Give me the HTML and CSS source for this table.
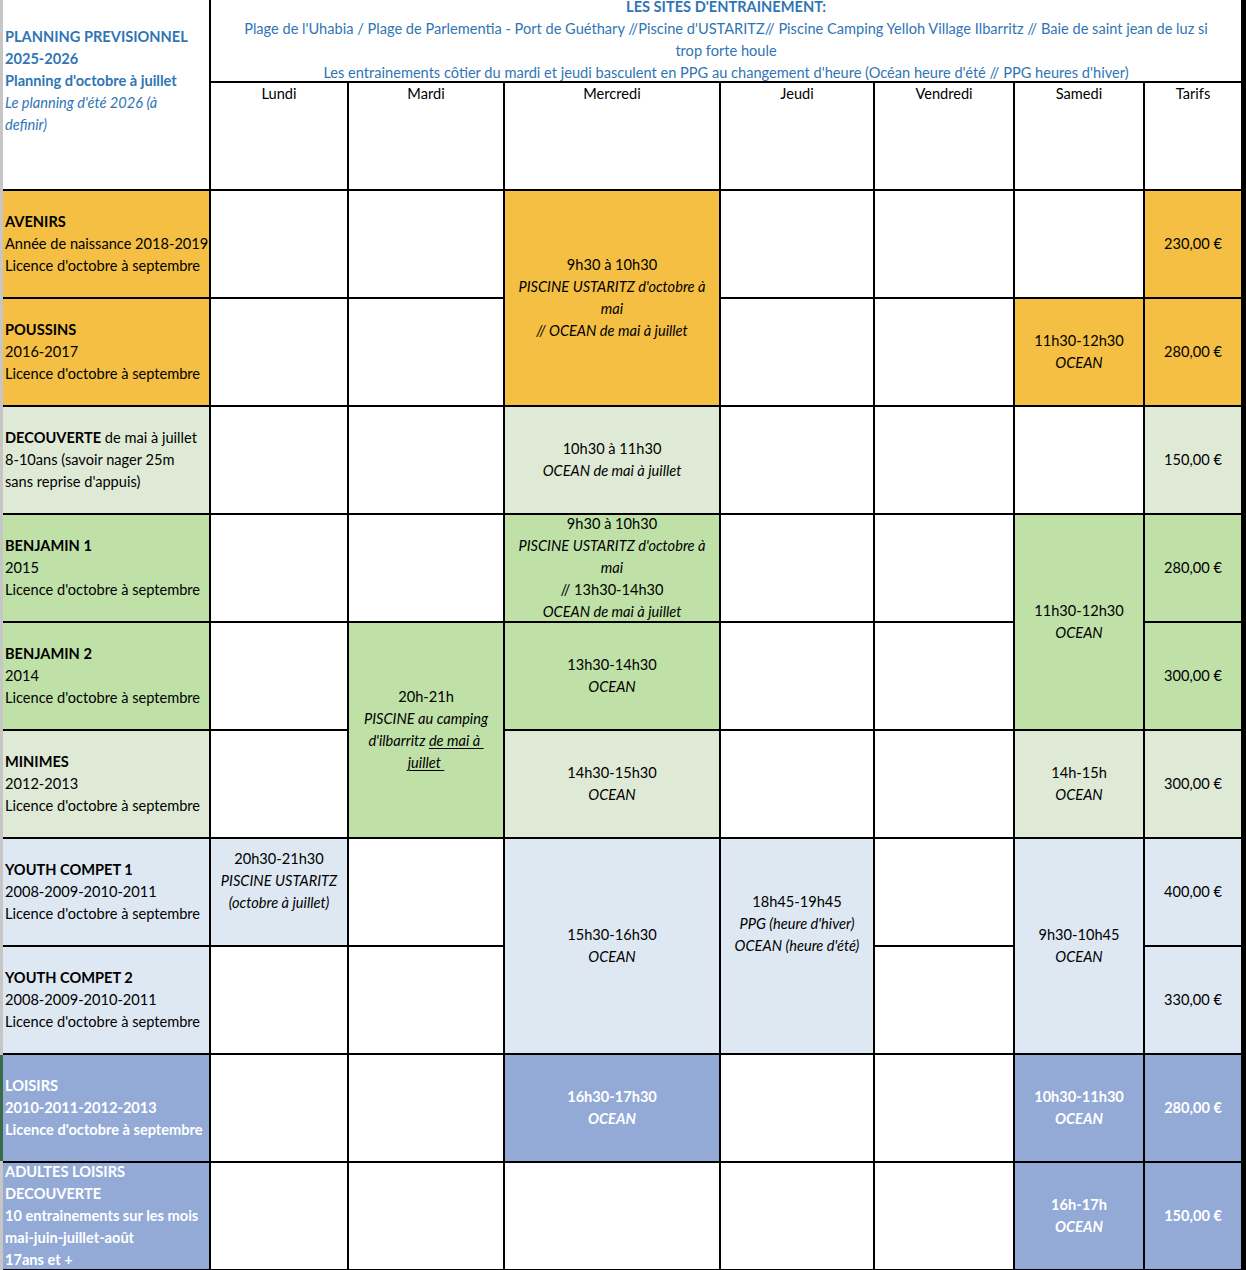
FILE: index.html
```html
<!DOCTYPE html>
<html lang="fr">
<head>
<meta charset="utf-8">
<title>Planning prévisionnel 2025-2026</title>
<link rel="stylesheet" href="styles.css">
</head>
<body>
<div class="sheet">
  <div class="grid">
    <div class="cell label title">
      <b>PLANNING PREVISIONNEL</b>
      <b>2025-2026</b>
      <b>Planning d'octobre à juillet</b>
      <i>Le planning d'été 2026 (à<br>definir)</i>
    </div>
    <div class="cell sites">
      <b>LES SITES D'ENTRAINEMENT:</b>
      <span>Plage de l'Uhabia / Plage de Parlementia - Port de Guéthary //Piscine d'USTARITZ// Piscine Camping Yelloh Village Ilbarritz // Baie de saint jean de luz si</span>
      <span>trop forte houle</span>
      <span>Les entrainements côtier du mardi et jeudi basculent en PPG au changement d'heure (Océan heure d'été // PPG heures d'hiver)</span>
    </div>

    <div class="cell day">Lundi</div>
    <div class="cell day">Mardi</div>
    <div class="cell day">Mercredi</div>
    <div class="cell day">Jeudi</div>
    <div class="cell day">Vendredi</div>
    <div class="cell day">Samedi</div>
    <div class="cell day">Tarifs</div>

    <!-- AVENIRS -->
    <div class="cell label orange"><b>AVENIRS</b><span>Année de naissance 2018-2019</span><span>Licence d'octobre à septembre</span></div>
    <div class="cell"></div>
    <div class="cell"></div>
    <div class="cell orange span2"><span>9h30 à 10h30</span><i>PISCINE USTARITZ d'octobre à<br>mai</i><i>// OCEAN de mai à juillet</i></div>
    <div class="cell"></div>
    <div class="cell"></div>
    <div class="cell"></div>
    <div class="cell orange">230,00 €</div>

    <!-- POUSSINS -->
    <div class="cell label orange"><b>POUSSINS</b><span>2016-2017</span><span>Licence d'octobre à septembre</span></div>
    <div class="cell"></div>
    <div class="cell"></div>
    <div class="cell"></div>
    <div class="cell"></div>
    <div class="cell orange"><span>11h30-12h30</span><i>OCEAN</i></div>
    <div class="cell orange">280,00 €</div>

    <!-- DECOUVERTE -->
    <div class="cell label lgreen"><span><strong>DECOUVERTE</strong> de mai à juillet</span><span>8-10ans (savoir nager 25m</span><span>sans reprise d'appuis)</span></div>
    <div class="cell"></div>
    <div class="cell"></div>
    <div class="cell lgreen"><span>10h30 à 11h30</span><i>OCEAN de mai à juillet</i></div>
    <div class="cell"></div>
    <div class="cell"></div>
    <div class="cell"></div>
    <div class="cell lgreen">150,00 €</div>

    <!-- BENJAMIN 1 -->
    <div class="cell label green"><b>BENJAMIN 1</b><span>2015</span><span>Licence d'octobre à septembre</span></div>
    <div class="cell"></div>
    <div class="cell"></div>
    <div class="cell green"><span>9h30 à 10h30</span><i>PISCINE USTARITZ d'octobre à<br>mai</i><span>// 13h30-14h30</span><i>OCEAN de mai à juillet</i></div>
    <div class="cell"></div>
    <div class="cell"></div>
    <div class="cell green span2"><span>11h30-12h30</span><i>OCEAN</i></div>
    <div class="cell green">280,00 €</div>

    <!-- BENJAMIN 2 -->
    <div class="cell label green"><b>BENJAMIN 2</b><span>2014</span><span>Licence d'octobre à septembre</span></div>
    <div class="cell"></div>
    <div class="cell green span2"><span>20h-21h</span><i>PISCINE au camping<br>d'ilbarritz <u>de mai à&nbsp;</u><br><u>juillet&nbsp;</u></i></div>
    <div class="cell green"><span>13h30-14h30</span><i>OCEAN</i></div>
    <div class="cell"></div>
    <div class="cell"></div>
    <div class="cell green">300,00 €</div>

    <!-- MINIMES -->
    <div class="cell label lgreen"><b>MINIMES</b><span>2012-2013</span><span>Licence d'octobre à septembre</span></div>
    <div class="cell"></div>
    <div class="cell lgreen"><span>14h30-15h30</span><i>OCEAN</i></div>
    <div class="cell"></div>
    <div class="cell"></div>
    <div class="cell lgreen"><span>14h-15h</span><i>OCEAN</i></div>
    <div class="cell lgreen">300,00 €</div>

    <!-- YOUTH COMPET 1 -->
    <div class="cell label lblue"><b>YOUTH COMPET 1</b><span>2008-2009-2010-2011</span><span>Licence d'octobre à septembre</span></div>
    <div class="cell lblue lift1"><span>20h30-21h30</span><i>PISCINE USTARITZ</i><i>(octobre à juillet)</i></div>
    <div class="cell"></div>
    <div class="cell lblue span2"><span>15h30-16h30</span><i>OCEAN</i></div>
    <div class="cell lblue span2 lift2"><span>18h45-19h45</span><i>PPG (heure d'hiver)</i><i>OCEAN (heure d'été)</i></div>
    <div class="cell"></div>
    <div class="cell lblue span2"><span>9h30-10h45</span><i>OCEAN</i></div>
    <div class="cell lblue">400,00 €</div>

    <!-- YOUTH COMPET 2 -->
    <div class="cell label lblue"><b>YOUTH COMPET 2</b><span>2008-2009-2010-2011</span><span>Licence d'octobre à septembre</span></div>
    <div class="cell"></div>
    <div class="cell"></div>
    <div class="cell"></div>
    <div class="cell lblue">330,00 €</div>

    <!-- LOISIRS -->
    <div class="cell label blue selected"><span>LOISIRS</span><span>2010-2011-2012-2013</span><span>Licence d'octobre à septembre</span></div>
    <div class="cell"></div>
    <div class="cell"></div>
    <div class="cell blue"><span>16h30-17h30</span><i>OCEAN</i></div>
    <div class="cell"></div>
    <div class="cell"></div>
    <div class="cell blue"><span>10h30-11h30</span><i>OCEAN</i></div>
    <div class="cell blue">280,00 €</div>

    <!-- ADULTES -->
    <div class="cell label blue"><span>ADULTES LOISIRS</span><span>DECOUVERTE</span><span>10 entrainements sur les mois</span><span>mai-juin-juillet-août</span><span>17ans et +</span></div>
    <div class="cell"></div>
    <div class="cell"></div>
    <div class="cell"></div>
    <div class="cell"></div>
    <div class="cell"></div>
    <div class="cell blue"><span>16h-17h</span><i>OCEAN</i></div>
    <div class="cell blue">150,00 €</div>
  </div>
</div>
</body>
</html>
```

FILE: styles.css
```css
html, body {
  margin: 0;
  padding: 0;
  background: #ffffff;
  overflow: hidden;
}

body {
  font-family: Lato, "Open Sans", "Liberation Sans", sans-serif;
  font-size: 14.6px;
  line-height: 22px;
  color: #000000;
}

.sheet {
  width: 1243px;
  border-left: 3px solid #c6c6c6;
}

.grid {
  display: grid;
  grid-template-columns: 206px 136px 154px 214px 152px 138px 128px 96px;
  grid-template-rows: 81px repeat(11, 106px);
  gap: 2px;
  background: #000000;
  padding: 0 2px 2px 0;
}

.cell {
  background: #ffffff;
  display: flex;
  flex-direction: column;
  justify-content: center;
  align-items: center;
  text-align: center;
  white-space: nowrap;
  min-width: 0;
}

.cell > i,
.cell > span,
.cell > b {
  display: block;
}

.cell u {
  text-decoration-thickness: 1px;
  text-underline-offset: 2px;
}

.label {
  align-items: flex-start;
  text-align: left;
  padding-left: 2px;
}

.title {
  grid-row: span 2;
  color: #2f75b5;
  padding-bottom: 28px;
}

.sites {
  grid-column: span 7;
  color: #2f75b5;
  padding-bottom: 2px;
}

.day {
  justify-content: flex-start;
}

.span2 {
  grid-row: span 2;
}

.lift1 {
  padding-bottom: 22px;
}

.lift2 {
  padding-bottom: 44px;
}

.orange {
  background: #f4bf42;
}

.lgreen {
  background: #dfead6;
}

.green {
  background: #bfe0a7;
}

.lblue {
  background: #dee8f3;
}

.blue {
  background: #93aad7;
  color: #ffffff;
  font-weight: 700;
}

.selected {
  box-shadow: -3px 0 0 #3a6b46;
}
```
